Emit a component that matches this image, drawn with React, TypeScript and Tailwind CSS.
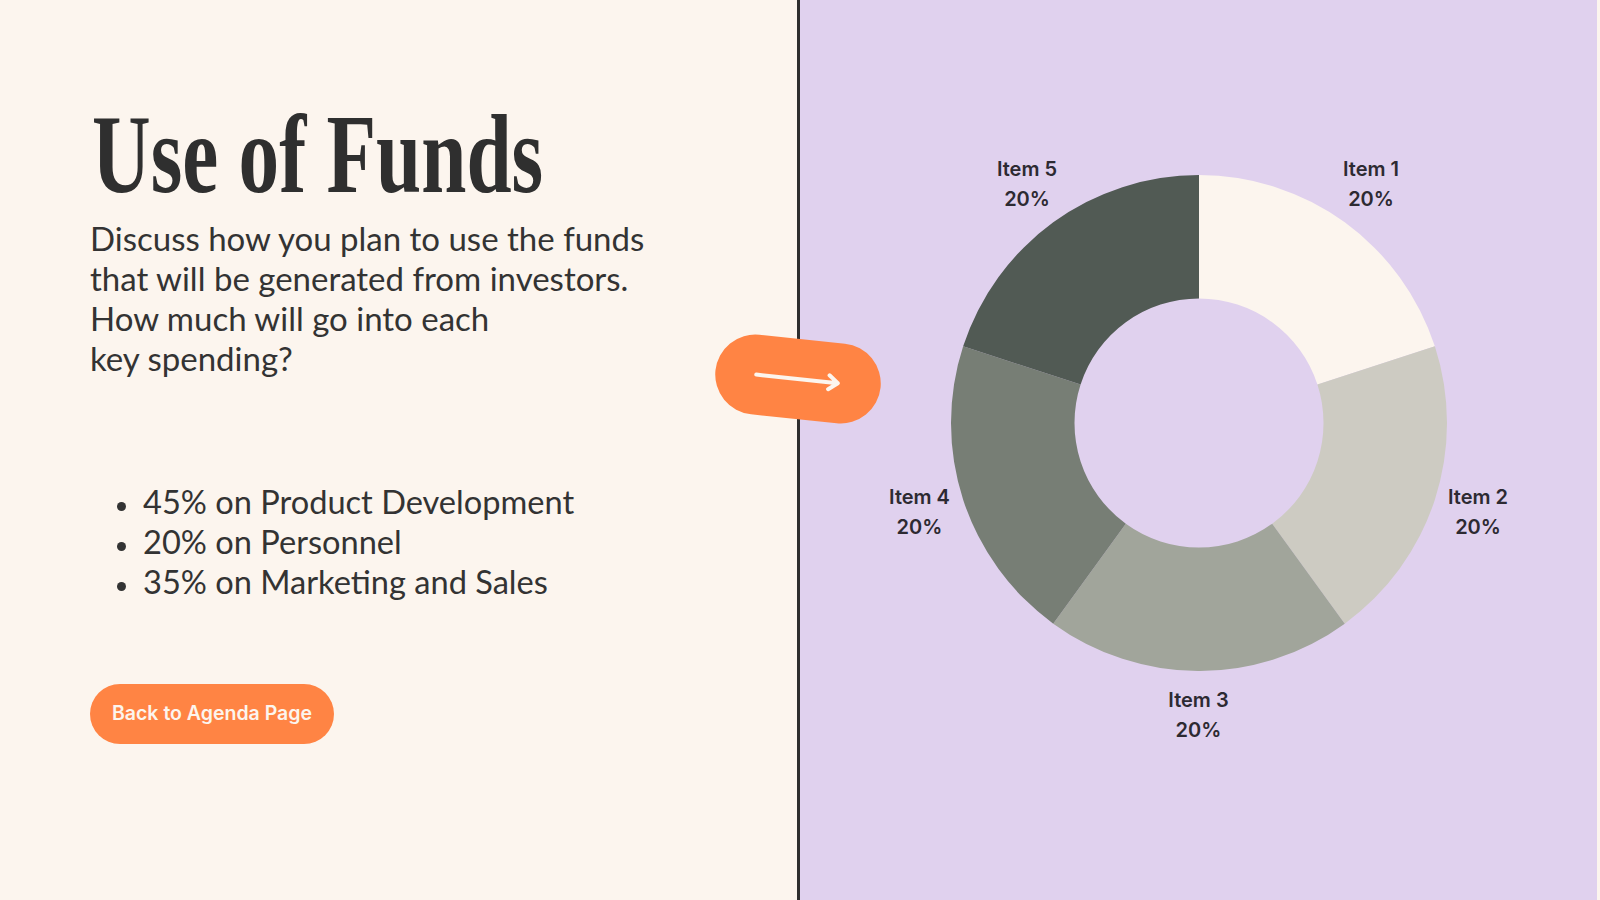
import React from "react"

const SLICES = [
  { label: "Item 1", color: "#FCF5EE" },
  { label: "Item 2", color: "#CDCBC2" },
  { label: "Item 3", color: "#A1A59B" },
  { label: "Item 4", color: "#777E75" },
  { label: "Item 5", color: "#515A54" },
]

const C = 248
const R_OUT = 248
const R_IN = 124.5

function pt(r: number, deg: number) {
  const a = (deg * Math.PI) / 180
  return `${(C + r * Math.cos(a)).toFixed(2)} ${(C + r * Math.sin(a)).toFixed(2)}`
}

function slicePath(i: number) {
  const a0 = -90 + 72 * i
  const a1 = a0 + 72
  return [
    `M ${pt(R_OUT, a0)}`,
    `A ${R_OUT} ${R_OUT} 0 0 1 ${pt(R_OUT, a1)}`,
    `L ${pt(R_IN, a1)}`,
    `A ${R_IN} ${R_IN} 0 0 0 ${pt(R_IN, a0)}`,
    "Z",
  ].join(" ")
}

function Label({ name, className }: { name: string; className: string }) {
  return (
    <div
      className={`absolute -translate-x-1/2 text-center font-['Inter',sans-serif] text-[20px] leading-[30px] font-semibold text-[#2d2a32] whitespace-nowrap ${className}`}
    >
      <div>{name}</div>
      <div>20%</div>
    </div>
  )
}

function Donut() {
  return (
    <div className="relative mt-[140px] mx-auto w-[640px] h-[620px] pt-[34.5px] flex justify-center">
      <svg width="496" height="496" viewBox="0 0 496 496">
        {SLICES.map((s, i) => (
          <path key={s.label} d={slicePath(i)} fill={s.color} />
        ))}
      </svg>
      <Label name="Item 1" className="left-[492.5px] top-[14px]" />
      <Label name="Item 5" className="left-[148.5px] top-[14px]" />
      <Label name="Item 2" className="left-[599.5px] top-[342px]" />
      <Label name="Item 4" className="left-[41px] top-[342px]" />
      <Label name="Item 3" className="left-[320px] top-[545px]" />
    </div>
  )
}

const BULLETS = [
  "45% on Product Development",
  "20% on Personnel",
  "35% on Marketing and Sales",
]

export default function App() {
  return (
    <div className="relative w-[1600px] h-[900px] flex overflow-hidden bg-[#FCF5EE] font-['Lato',sans-serif]">
      <div className="w-[797px] h-full pl-[90px] pt-[98px] flex flex-col items-start text-[#333333]">
        <h1 className="ml-[2px] font-['Liberation_Serif',serif] font-bold text-[112px] leading-none text-[#2f2f2f] origin-left scale-x-[0.725] whitespace-nowrap">
          Use of Funds
        </h1>
        <p className="mt-[8px] text-[33px] leading-[40px]">
          Discuss how you plan to use the funds
          <br />
          that will be generated from investors.
          <br />
          How much will go into each
          <br />
          key spending?
        </p>
        <ul className="mt-[104px] flex flex-col">
          {BULLETS.map((b) => (
            <li key={b} className="flex items-start text-[32.6px] leading-[40px]">
              <span className="ml-[27px] mt-[20px] w-[9px] h-[9px] rounded-full bg-[#333333]" />
              <span className="ml-[17px]">{b}</span>
            </li>
          ))}
        </ul>
        <button className="mt-[82px] w-[244px] h-[60px] rounded-full bg-[#FF8444] text-[#FCF5EE] font-['Inter',sans-serif] text-[19.5px] font-semibold">
          Back to Agenda Page
        </button>
      </div>
      <div className="w-[3px] h-full bg-[#2e2e2e]" />
      <div className="w-[797px] h-full bg-[#E0D1EE]">
        <Donut />
      </div>
      <div className="flex-1 h-full bg-[#FCF5EE]" />

      <div className="absolute left-[714.5px] top-[339px] w-[166px] h-[80px] rounded-full bg-[#FF8444] rotate-[6deg] flex items-center justify-center">
        <svg width="90" height="20" viewBox="0 0 90 20" fill="none">
          <path
            d="M3 10 H85 M76 3 L85 10 L76 17"
            stroke="#FCF5EE"
            strokeWidth="4"
            strokeLinecap="round"
            strokeLinejoin="round"
          />
        </svg>
      </div>
    </div>
  )
}
